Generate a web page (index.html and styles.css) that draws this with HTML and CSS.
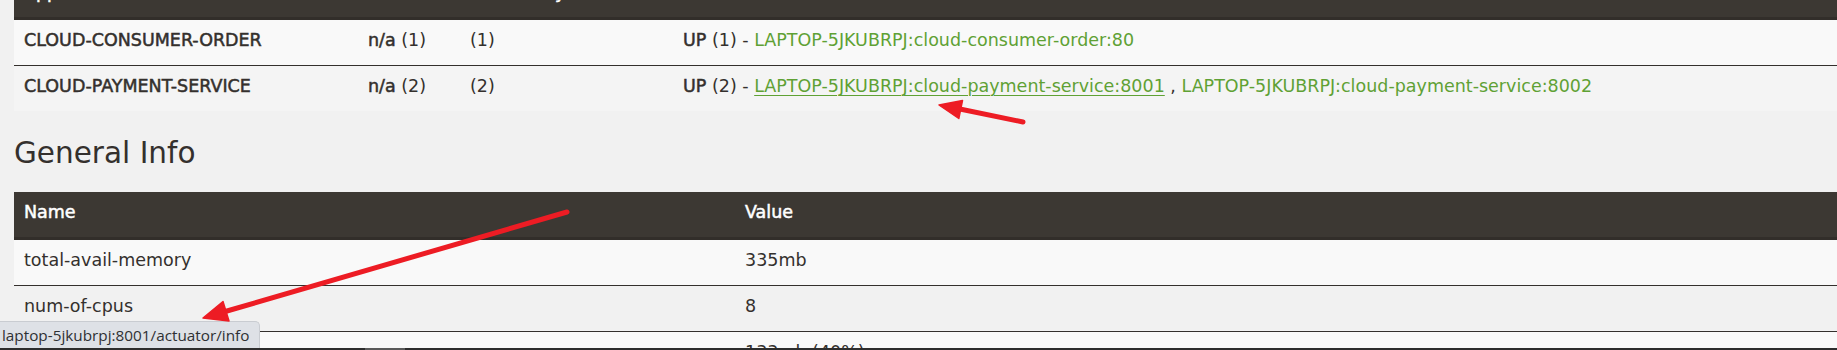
FILE: index.html
```html
<!DOCTYPE html>
<html lang="en">
<head>
<meta charset="utf-8">
<title>Eureka</title>
<link rel="stylesheet" href="styles.css">
</head>
<body>
<div class="page">
  <table class="grid apps">
    <colgroup>
      <col class="c-app"><col class="c-ami"><col class="c-zone"><col class="c-status">
    </colgroup>
    <thead>
      <tr><th>Application</th><th>AMIs</th><th>Availability Zones</th><th>Status</th></tr>
    </thead>
    <tbody>
      <tr>
        <td><b>CLOUD-CONSUMER-ORDER</b></td>
        <td><b>n/a</b> (1)</td>
        <td>(1)</td>
        <td><b>UP</b> (1) - <a href="#">LAPTOP-5JKUBRPJ:cloud-consumer-order:80</a></td>
      </tr>
      <tr class="hover">
        <td><b>CLOUD-PAYMENT-SERVICE</b></td>
        <td><b>n/a</b> (2)</td>
        <td>(2)</td>
        <td><b>UP</b> (2) - <a href="#" class="hovered">LAPTOP-5JKUBRPJ:cloud-payment-service:8001</a> , <a href="#">LAPTOP-5JKUBRPJ:cloud-payment-service:8002</a></td>
      </tr>
    </tbody>
  </table>

  <h2 class="section-title">General Info</h2>

  <table class="grid info">
    <colgroup>
      <col class="c-name"><col class="c-value">
    </colgroup>
    <thead>
      <tr><th>Name</th><th>Value</th></tr>
    </thead>
    <tbody>
      <tr><td>total-avail-memory</td><td>335mb</td></tr>
      <tr><td>num-of-cpus</td><td>8</td></tr>
      <tr><td>current-memory-usage</td><td>133mb (40%)</td></tr>
    </tbody>
  </table>
</div>

<div class="status-bubble">laptop-5jkubrpj:8001/actuator/info</div>
<div class="taskbar"><span class="taskbar-seg"></span></div>

<svg class="annotations" width="1837" height="350" viewBox="0 0 1837 350" xmlns="http://www.w3.org/2000/svg">
  <g fill="#ed1c24" stroke="#ed1c24" stroke-linecap="round" stroke-linejoin="round">
    <line x1="1023" y1="122" x2="955" y2="108" stroke-width="5"/>
    <polygon points="939,105 962.5,100.5 958.8,118.5" stroke-width="1.5"/>
    <line x1="567" y1="212" x2="220" y2="313" stroke-width="5"/>
    <polygon points="203,318 223,301.5 229,321" stroke-width="1.5"/>
  </g>
</svg>
</body>
</html>
```

FILE: styles.css
```css
html, body {
  margin: 0;
  padding: 0;
  background: #f1f1f1;
  overflow: hidden;
}

body {
  width: 1837px;
  height: 350px;
  position: relative;
  font-family: "DejaVu Sans", "Noto Sans", sans-serif;
  font-size: 17.5px;
  color: #34302d;
}

.page {
  margin-top: -28px;
  padding-left: 14px;
}

.grid {
  border-collapse: separate;
  border-spacing: 0;
  table-layout: fixed;
  width: 1840px;
}

.grid th,
.grid td {
  padding: 10px 10px 14px;
  line-height: 21px;
  text-align: left;
  white-space: nowrap;
  overflow: hidden;
}

.grid th {
  background: #3c3833;
  color: #ffffff;
  font-weight: normal;
  -webkit-text-stroke: 0.5px #ffffff;
  border-bottom: 3px solid #322e2a;
}

.grid b {
  font-weight: normal;
  -webkit-text-stroke: 0.5px #34302d;
}

.grid tbody tr:nth-child(odd) td {
  background: #f9f9f9;
}

.grid tbody tr + tr td {
  border-top: 1px solid #34302d;
}

.grid tbody tr.hover td {
  background: #f4f4f4;
}

.grid a {
  color: #5fa134;
  text-decoration: none;
}

.grid a.hovered {
  text-decoration: underline;
  text-underline-offset: 3px;
  text-decoration-thickness: 1px;
}

.c-app { width: 344px; }
.c-ami { width: 102px; }
.c-zone { width: 213px; }
.c-status { width: auto; }

.c-name { width: 721px; }
.c-value { width: auto; }

.section-title {
  margin: 26px 0 22px;
  font-size: 29.5px;
  line-height: 33px;
  font-weight: normal;
  color: #34302d;
}

.status-bubble {
  position: absolute;
  left: 0;
  bottom: 2px;
  height: 26px;
  padding: 0 10px 0 2px;
  background: #dee1e6;
  border-top: 1px solid #c9ccd1;
  border-right: 1px solid #c9ccd1;
  border-top-right-radius: 5px;
  font-family: "Open Sans", "Noto Sans", sans-serif;
  font-size: 15.3px;
  line-height: 26px;
  color: #2e3033;
  white-space: nowrap;
}

.taskbar {
  position: absolute;
  left: 0;
  bottom: 0;
  width: 100%;
  height: 2px;
  background: #2d2d2d;
  display: flex;
}

.taskbar-seg {
  margin-left: 365px;
  width: 40px;
  height: 2px;
  background: #5a5a5a;
}

.annotations {
  position: absolute;
  left: 0;
  top: 0;
  pointer-events: none;
}
```
